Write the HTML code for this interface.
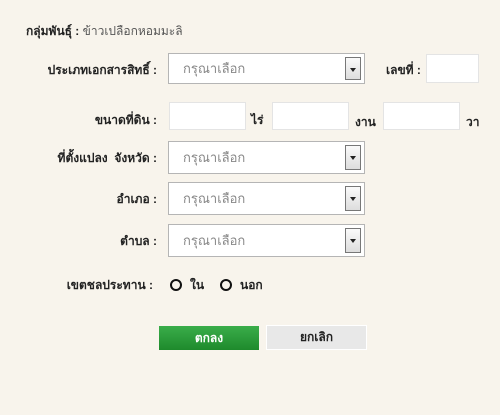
<!DOCTYPE html>
<html><head><meta charset="utf-8"><style>
body{margin:0;width:500px;height:415px;background:#f8f4ec;font-family:"Liberation Sans","Noto Sans CJK SC",sans-serif;font-size:12px;color:#222;position:relative;overflow:hidden}
.a{position:absolute}
.lbl{position:absolute;font-weight:bold;text-align:right;width:200px;line-height:16px}
.inp{position:absolute;background:#fff;border:1px solid #e4e4e4;box-sizing:border-box}
.sel{position:absolute;background:#fff;border:1px solid #b5b5b5;box-sizing:border-box;width:197px;color:#888;font-size:13px;padding-left:14px}
.arr{position:absolute;right:3px;top:3px;bottom:3px;width:16px;border:1px solid #777;background:linear-gradient(#fafafa,#ddd);box-sizing:border-box}
.arr:after{content:"";position:absolute;left:4px;top:10px;border-left:3px solid transparent;border-right:3px solid transparent;border-top:4px solid #222}
.rad{position:absolute;width:8px;height:8px;border:2px solid #111;border-radius:50%}
</style></head><body>
<div class="a" style="left:26px;top:23px;line-height:16px"><b>กลุ่มพันธุ์ :</b> <span style="color:#555">ข้าวเปลือกหอมมะลิ</span></div>

<div class="lbl" style="left:-43px;top:62px">ประเภทเอกสารสิทธิ์ :</div>
<div class="sel" style="left:168px;top:53px;height:31px;line-height:29px">กรุณาเลือก<div class="arr"></div></div>
<div class="lbl" style="left:386px;top:62px;text-align:left">เลขที่ :</div>
<div class="inp" style="left:426px;top:54px;width:53px;height:29px"></div>

<div class="lbl" style="left:-43px;top:112px">ขนาดที่ดิน :</div>
<div class="inp" style="left:169px;top:102px;width:77px;height:28px"></div>
<div class="lbl" style="left:251px;top:112px;text-align:left">ไร่</div>
<div class="inp" style="left:272px;top:102px;width:77px;height:28px"></div>
<div class="lbl" style="left:355px;top:114px;text-align:left">งาน</div>
<div class="inp" style="left:383px;top:102px;width:77px;height:28px"></div>
<div class="lbl" style="left:466px;top:114px;text-align:left">วา</div>

<div class="lbl" style="left:-43px;top:150px">ที่ตั้งแปลง&nbsp; จังหวัด :</div>
<div class="sel" style="left:168px;top:141px;height:33px;line-height:31px">กรุณาเลือก<div class="arr"></div></div>
<div class="lbl" style="left:-43px;top:191px">อำเภอ :</div>
<div class="sel" style="left:168px;top:182px;height:33px;line-height:31px">กรุณาเลือก<div class="arr"></div></div>
<div class="lbl" style="left:-43px;top:233px">ตำบล :</div>
<div class="sel" style="left:168px;top:224px;height:33px;line-height:31px">กรุณาเลือก<div class="arr"></div></div>

<div class="lbl" style="left:-47px;top:277px">เขตชลประทาน :</div>
<div class="rad" style="left:170px;top:279px"></div>
<div class="lbl" style="left:190px;top:277px;text-align:left">ใน</div>
<div class="rad" style="left:220px;top:279px"></div>
<div class="lbl" style="left:240px;top:277px;text-align:left">นอก</div>

<div class="a" style="left:159px;top:326px;width:100px;height:24px;background:linear-gradient(#3aad4a,#1e8a2c);color:#fff;font-weight:bold;text-align:center;line-height:24px">ตกลง</div>
<div class="a" style="left:266px;top:325px;width:101px;height:25px;background:#e8e8e8;border:1px solid #fff;box-sizing:border-box;font-weight:bold;text-align:center;line-height:23px">ยกเลิก</div>
</body></html>
